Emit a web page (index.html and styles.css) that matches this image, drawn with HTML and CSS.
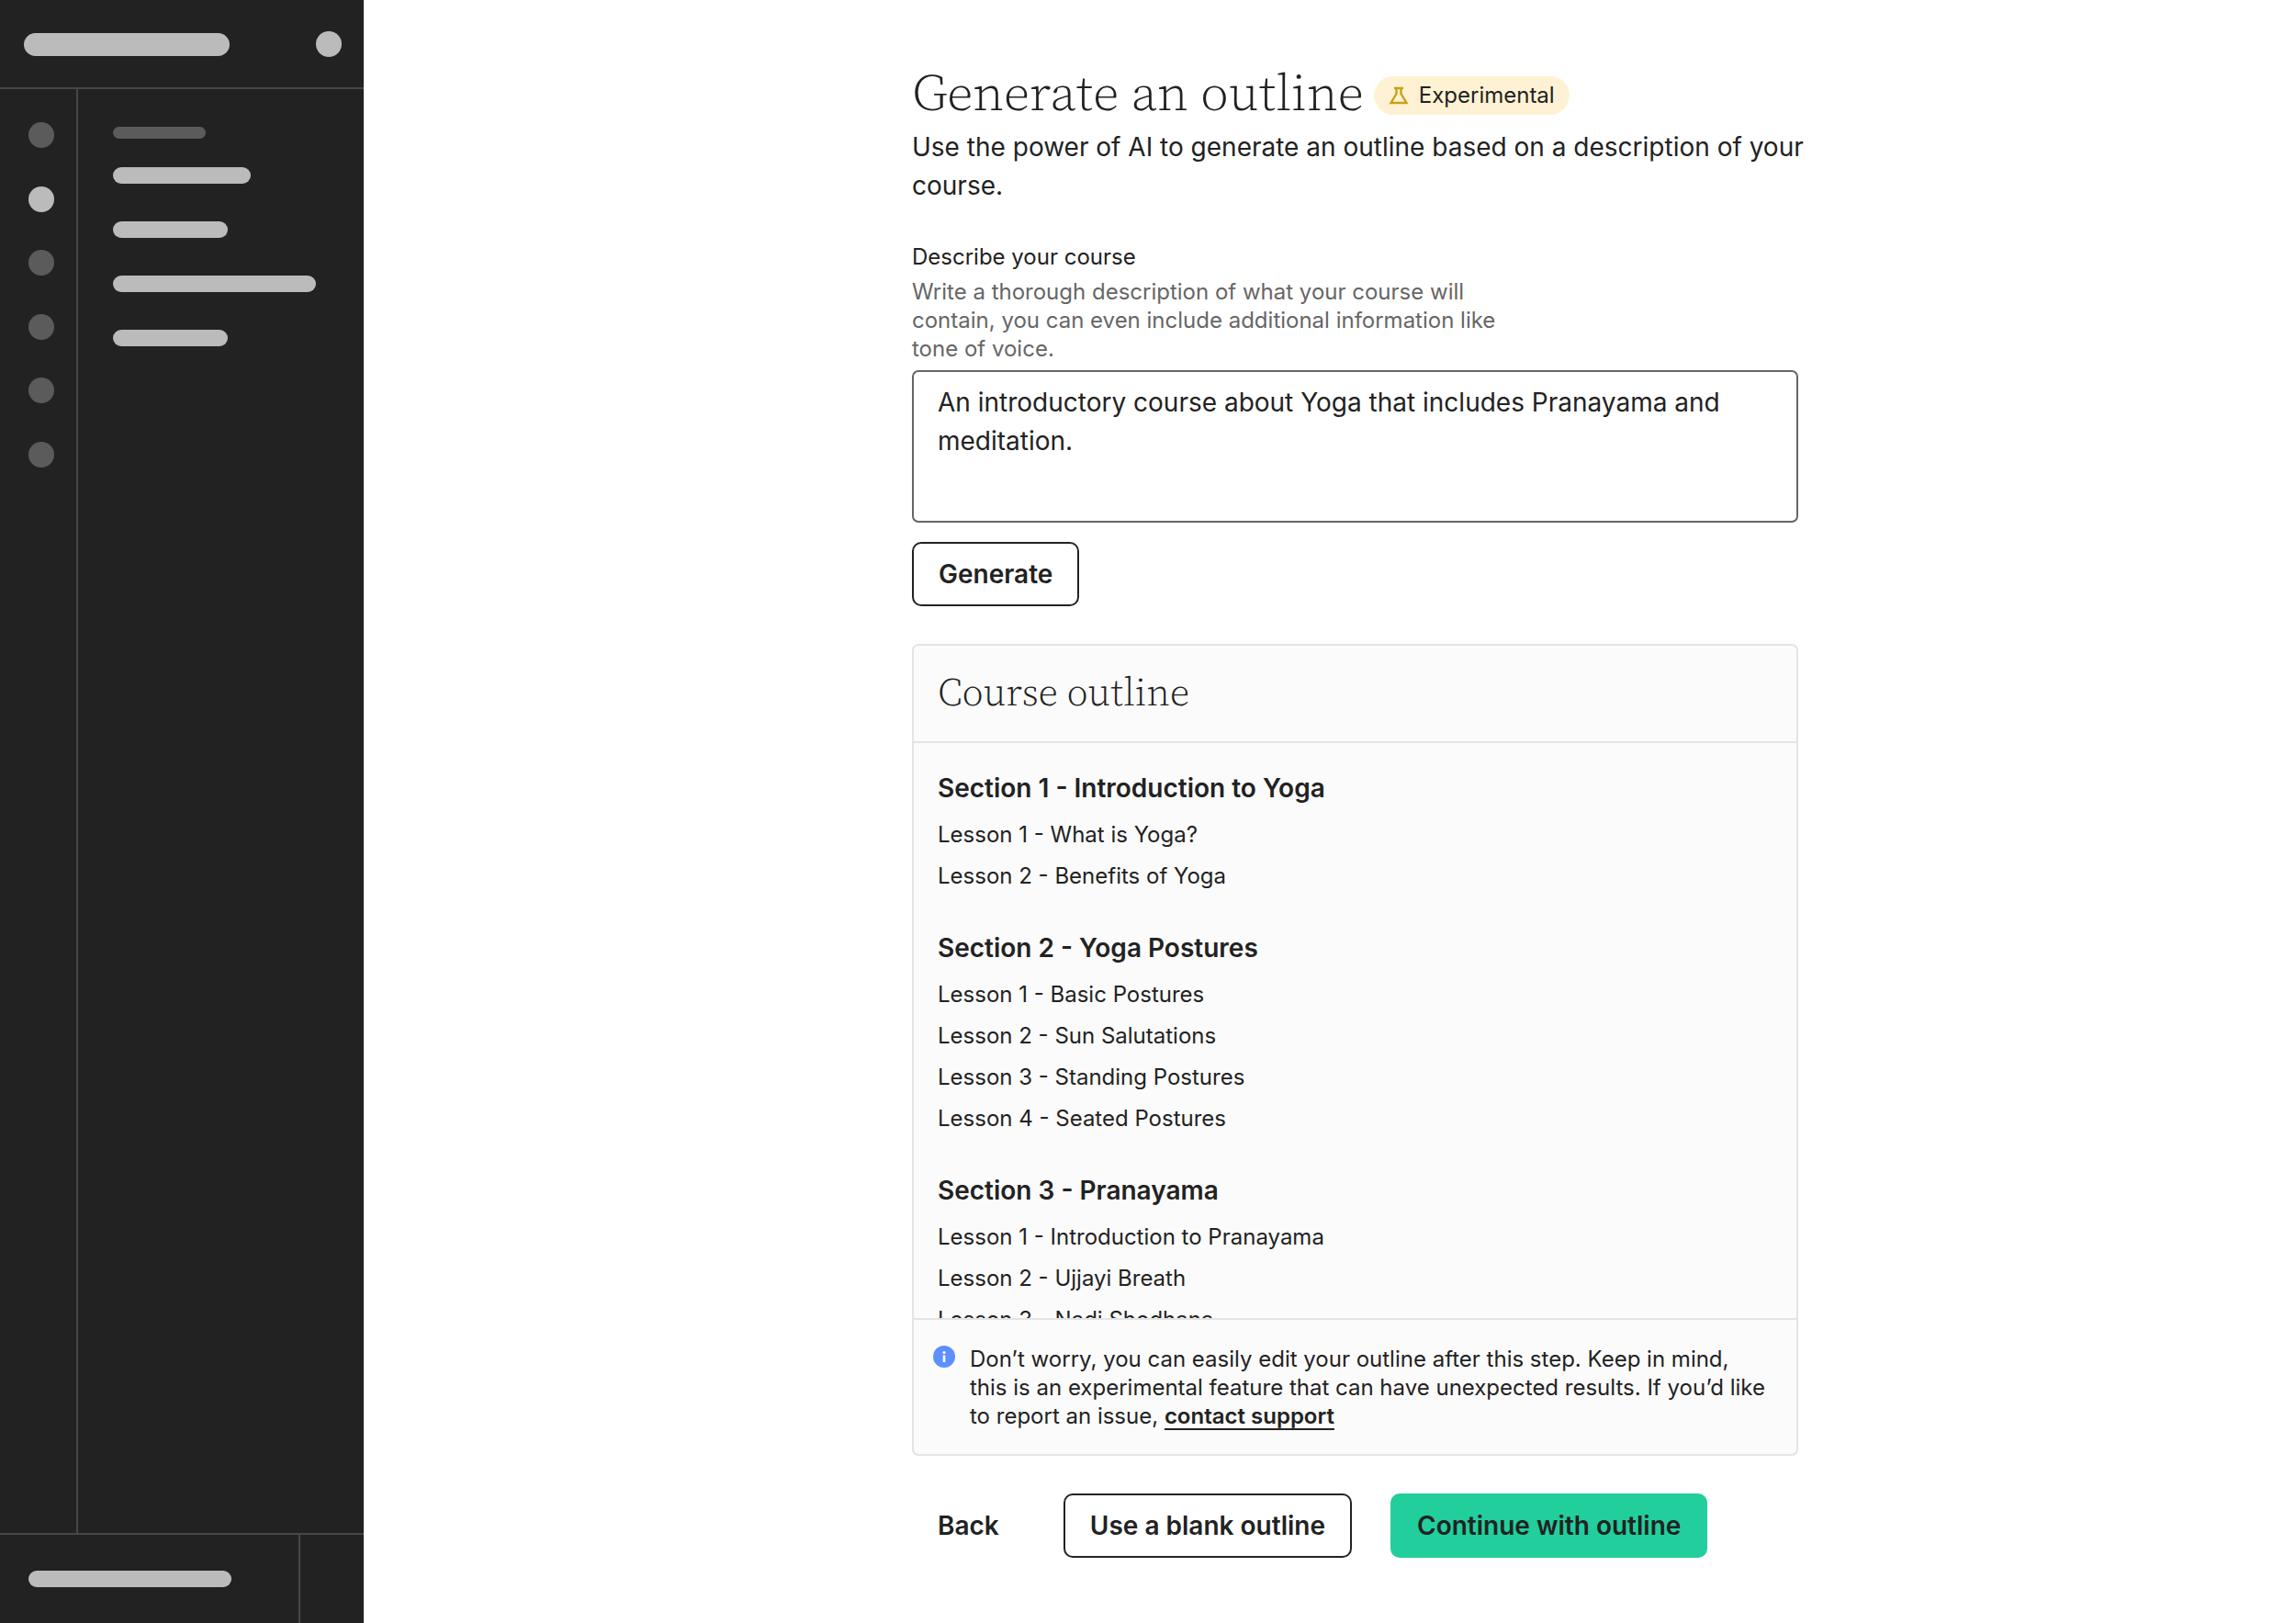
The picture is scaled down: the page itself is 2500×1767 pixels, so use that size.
FILE: index.html
```html
<!DOCTYPE html>
<html lang="en">
<head>
    <meta charset="UTF-8">
    <meta name="viewport" content="width=device-width, initial-scale=1.0">
    <title>Generate an outline</title>
    <link rel="stylesheet" href="styles.css">
</head>
<body>
    <!-- Sidebar -->
    <aside class="sidebar">
        <div class="sidebar-header">
            <span class="bar bar-logo"></span>
            <span class="dot dot-active"></span>
        </div>
        <div class="sidebar-body">
            <div class="rail">
                <div class="rail-dots">
                    <span class="dot"></span>
                    <span class="dot dot-active"></span>
                    <span class="dot"></span>
                    <span class="dot"></span>
                    <span class="dot"></span>
                    <span class="dot"></span>
                </div>
            </div>
            <div class="menu">
                <span class="bar bar-heading"></span>
                <span class="bar bar-medium"></span>
                <span class="bar bar-short"></span>
                <span class="bar bar-long"></span>
                <span class="bar bar-short"></span>
            </div>
        </div>
        <div class="sidebar-footer">
            <div class="account"><span class="bar bar-long"></span></div>
        </div>
    </aside>

    <main class="main">
        <div class="content">
            <header class="page-header">
                <h1>Generate an outline</h1>
                <span class="badge">
                    <svg class="badge-icon" viewBox="0 0 22 20" fill="none" stroke="#c9a012" stroke-width="2.4" aria-hidden="true">
                        <path d="M6 2h10M8.5 2v6L2.5 18h17l-6-10V2"/>
                    </svg>
                    Experimental
                </span>
            </header>
            <p class="intro">Use the power of AI to generate an outline based on a description of your course.</p>

            <!-- Description form -->
            <form class="describe">
                <label for="description">Describe your course</label>
                <p class="help" id="description-help">Write a thorough description of what your course will contain, you can even include additional information like tone of voice.</p>
                <textarea id="description" aria-describedby="description-help">An introductory course about Yoga that includes Pranayama and meditation.</textarea>
                <button type="button" class="btn btn-outline">Generate</button>
            </form>

            <!-- Generated outline -->
            <section class="card">
                <div class="card-header">
                    <h2>Course outline</h2>
                </div>
                <div class="card-body">
                    <div class="section">
                        <h3>Section 1 - Introduction to Yoga</h3>
                        <ul>
                            <li>Lesson 1 - What is Yoga?</li>
                            <li>Lesson 2 - Benefits of Yoga</li>
                        </ul>
                    </div>
                    <div class="section">
                        <h3>Section 2 - Yoga Postures</h3>
                        <ul>
                            <li>Lesson 1 - Basic Postures</li>
                            <li>Lesson 2 - Sun Salutations</li>
                            <li>Lesson 3 - Standing Postures</li>
                            <li>Lesson 4 - Seated Postures</li>
                        </ul>
                    </div>
                    <div class="section">
                        <h3>Section 3 - Pranayama</h3>
                        <ul>
                            <li>Lesson 1 - Introduction to Pranayama</li>
                            <li>Lesson 2 - Ujjayi Breath</li>
                            <li>Lesson 3 - Nadi Shodhana</li>
                        </ul>
                    </div>
                </div>
                <div class="card-footer">
                    <svg class="info-icon" viewBox="0 0 24 24" aria-hidden="true">
                        <circle cx="12" cy="12" r="12" fill="#5f8fff"/>
                        <circle cx="12" cy="7.5" r="1.6" fill="#fff"/>
                        <path d="M12 10.5v7.5" stroke="#fff" stroke-width="2.6"/>
                    </svg>
                    <p>Don’t worry, you can easily edit your outline after this step. Keep in mind, this is an experimental feature that can have unexpected results. If you’d like to report an issue, <a href="#">contact support</a></p>
                </div>
            </section>

            <div class="actions">
                <button type="button" class="btn btn-text">Back</button>
                <button type="button" class="btn btn-outline">Use a blank outline</button>
                <button type="button" class="btn btn-primary">Continue with outline</button>
            </div>
        </div>
    </main>
</body>
</html>
```
FILE: styles.css
```css
* {
    box-sizing: border-box;
}

body {
    margin: 0;
    min-height: 100vh;
    display: flex;
    background: #fff;
    color: #222;
    font-family: Inter, 'Liberation Sans', sans-serif;
    font-size: 28px;
    line-height: 42px;
}

h1, h2, h3, p, ul {
    margin: 0;
    padding: 0;
}

h1, h2 {
    font-family: 'Source Serif 4', 'Source Serif Pro', 'Noto Serif', 'Liberation Serif', serif;
    font-weight: 300;
}

/* Sidebar */
.sidebar {
    flex: none;
    width: 396px;
    display: flex;
    flex-direction: column;
    background: #222;
}

.sidebar-header {
    display: flex;
    align-items: center;
    justify-content: space-between;
    height: 97px;
    padding: 1px 24px 0 26px;
    border-bottom: 2px solid #474747;
}

.sidebar-body {
    flex: 1;
    display: flex;
}

.rail {
    width: 85px;
    padding: 36px 0 0 31px;
    border-right: 2px solid #474747;
}

.rail-dots {
    display: flex;
    flex-direction: column;
    justify-content: space-between;
    height: 376px;
}

.menu {
    display: flex;
    flex-direction: column;
    gap: 41px;
    padding: 41px 38px;
}

.sidebar-footer {
    display: flex;
    height: 98px;
    border-top: 2px solid #474747;
}

.account {
    display: flex;
    align-items: center;
    width: 327px;
    padding-left: 31px;
    border-right: 2px solid #474747;
}

.dot {
    width: 28px;
    height: 28px;
    border-radius: 50%;
    background: #5b5b5b;
}

.dot-active {
    background: #bbb;
}

.bar {
    height: 18px;
    border-radius: 14px;
    background: #bbb;
}

.bar-logo {
    width: 224px;
    height: 25px;
}

.bar-heading {
    width: 101px;
    height: 13px;
    margin-bottom: -10px;
    background: #5b5b5b;
}

.bar-short {
    width: 125px;
}

.bar-medium {
    width: 150px;
}

.bar-long {
    width: 221px;
}

/* Page */
.main {
    flex: 1;
    padding: 69px 0 69px 55px;
}

.content {
    max-width: 965px;
    margin: 0 auto;
}

.page-header {
    display: flex;
    align-items: center;
    gap: 11px;
    height: 70px;
}

h1 {
    padding-bottom: 7px;
    font-size: 56px;
    line-height: 64px;
}

.badge {
    display: flex;
    align-items: center;
    gap: 11px;
    height: 42px;
    padding: 0 16px;
    border-radius: 21px;
    background: #fff2d4;
    font-size: 24px;
}

.badge-icon {
    width: 22px;
    height: 20px;
}

.intro {
    margin-right: -14px;
}

/* Description form */
.describe {
    display: flex;
    flex-direction: column;
    align-items: flex-start;
    margin-top: 41px;
}

.describe label {
    font-size: 24px;
    line-height: 31px;
}

.help {
    max-width: 660px;
    margin-top: 7px;
    color: #666;
    font-size: 24px;
    line-height: 31px;
}

textarea {
    display: block;
    width: 100%;
    height: 166px;
    margin: 8px 0 21px;
    padding: 12px 26px;
    border: 2px solid #666;
    border-radius: 7px;
    background: #fff;
    color: inherit;
    font: inherit;
    resize: none;
}

/* Buttons */
.btn {
    height: 70px;
    padding: 0 27px;
    border: 2px solid transparent;
    border-radius: 10px;
    background: none;
    color: #222;
    font: inherit;
    font-weight: 600;
    cursor: pointer;
}

.btn-text {
    padding: 0 26px;
}

.btn-outline {
    border-color: #222;
    background: #fff;
}

.btn-primary {
    border-color: #22ce9c;
    background: #22ce9c;
}

/* Outline card */
.card {
    margin-top: 41px;
    border: 2px solid #e4e4e4;
    border-radius: 7px;
    background: #fbfbfb;
}

.card-header {
    padding: 24px 26px 28px;
    border-bottom: 2px solid #e4e4e4;
}

h2 {
    font-size: 42px;
    line-height: 52px;
}

.card-body {
    display: flex;
    flex-direction: column;
    gap: 42px;
    height: 626px;
    padding: 28px 26px;
    overflow: hidden;
}

h3 {
    font-size: 28px;
    font-weight: 600;
}

.section ul {
    list-style: none;
}

.section li {
    margin-top: 14px;
    font-size: 24px;
    line-height: 31px;
}

.card-footer {
    display: flex;
    align-items: flex-start;
    gap: 16px;
    padding: 27px 30px 26px 21px;
    border-top: 2px solid #e4e4e4;
    font-size: 24px;
    line-height: 31px;
}

.info-icon {
    flex: none;
    width: 24px;
    height: 24px;
    margin-top: 1px;
}

.card-footer a {
    color: inherit;
    font-weight: 600;
    text-decoration-thickness: 2px;
    text-underline-offset: 5px;
    text-decoration-skip-ink: none;
}

.actions {
    display: flex;
    gap: 42px;
    margin-top: 41px;
}
```
